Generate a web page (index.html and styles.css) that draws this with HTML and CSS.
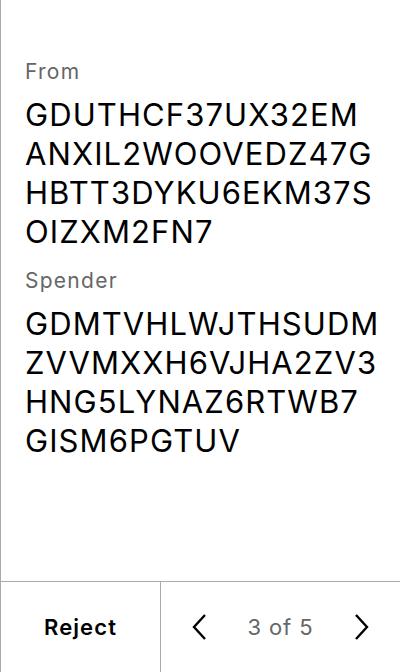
FILE: index.html
```html
<html>
  <head>
    <title>Approve transaction</title>
    <link rel="stylesheet" href="styles.css">
  </head>
  <body>
    <div class="screen">
      <div class="details">
        <div class="field">
          <span class="label">From</span>
          <span class="address">GDUTHCF37UX32EM<br>ANXIL2WOOVEDZ47G<br>HBTT3DYKU6EKM37S<br>OIZXM2FN7</span>
        </div>
        <div class="field">
          <span class="label">Spender</span>
          <span class="address">GDMTVHLWJTHSUDM<br>ZVVMXXH6VJHA2ZV3<br>HNG5LYNAZ6RTWB7<br>GISM6PGTUV</span>
        </div>
      </div>
      <div class="footer">
        <button class="reject">Reject</button>
        <div class="pager">
          <button class="arrow">
            <svg width="16" height="28" viewBox="0 0 16 28"><path d="M14 2 L3 14 L14 26" fill="none" stroke="#000" stroke-width="2.4"/></svg>
          </button>
          <span class="count">3 of 5</span>
          <button class="arrow">
            <svg width="16" height="28" viewBox="0 0 16 28"><path d="M2 2 L13 14 L2 26" fill="none" stroke="#000" stroke-width="2.4"/></svg>
          </button>
        </div>
      </div>
    </div>
  </body>
</html>
```

FILE: styles.css
```css
body {
  margin: 0;
  font-family: Inter, "Noto Sans", sans-serif;
  background-color: #fff;
  color: #000;
}

.screen {
  height: 672px;
  display: flex;
  flex-direction: column;
  border-left: 1px solid #aaa;
  box-sizing: border-box;
}

.details {
  flex: 1;
  padding: 58px 24px 0 24px;
  display: flex;
  flex-direction: column;
  gap: 16px;
}

.field {
  display: flex;
  flex-direction: column;
}

.label {
  font-size: 21px;
  line-height: 28px;
  letter-spacing: 0.06em;
  color: #666;
  margin-bottom: 9px;
}

.address {
  font-size: 31px;
  line-height: 39px;
  letter-spacing: 0.035em;
}

.footer {
  height: 90px;
  display: flex;
  border-top: 1px solid #aaa;
}

button {
  font-family: inherit;
  background: none;
  border: none;
  padding: 0;
  cursor: pointer;
}

.reject {
  width: 160px;
  font-size: 22px;
  font-weight: 600;
  letter-spacing: 0.05em;
  border-right: 1px solid #aaa;
  color: #000;
}

.pager {
  flex: 1;
  display: flex;
  align-items: center;
  justify-content: space-between;
  padding: 0 30px 0 30px;
}

.arrow {
  display: flex;
  align-items: center;
}

.count {
  font-size: 22px;
  letter-spacing: 0.04em;
  color: #666;
}
```
